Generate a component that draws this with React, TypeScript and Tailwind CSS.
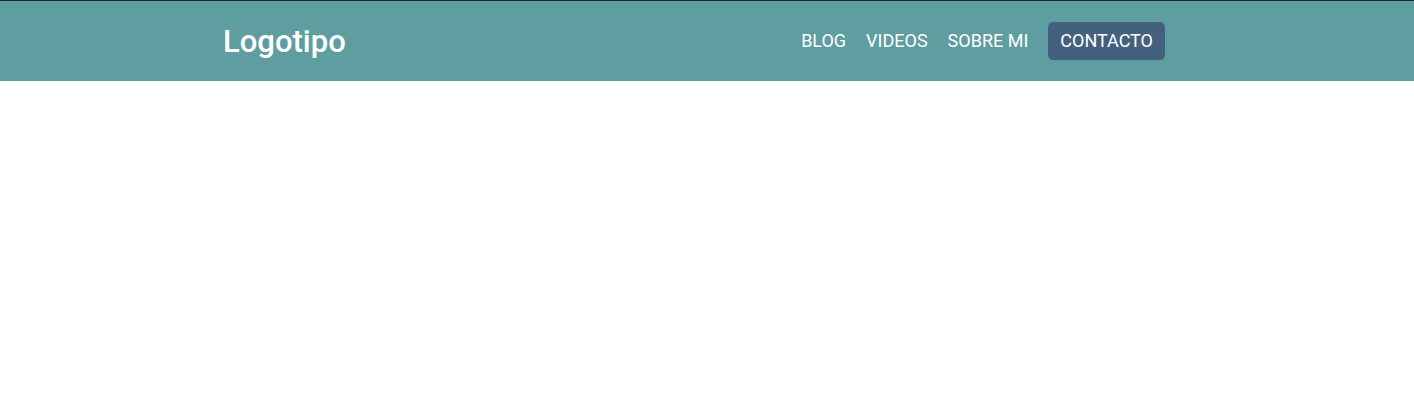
import React from "react";

export default function App() {
  return (
    <div className="min-h-[407px] bg-white" style={{ fontFamily: "Roboto, 'Liberation Sans', sans-serif" }}>
      <header className="h-[81px] border-t border-[#1b2b2e] bg-[#5f9ea0]">
        <div className="flex h-full items-center justify-between pl-[223px] pr-[249px]">
          <div className="text-[31px] font-medium leading-none text-white">Logotipo</div>
          <nav className="flex items-center gap-5 text-[18px] text-white">
            <a className="leading-[22px]">BLOG</a>
            <a className="leading-[22px]">VIDEOS</a>
            <a className="leading-[22px]">SOBRE MI</a>
            <a className="rounded-[5px] bg-[#43617c] px-3 py-2 leading-[22px]">CONTACTO</a>
          </nav>
        </div>
      </header>
    </div>
  );
}
